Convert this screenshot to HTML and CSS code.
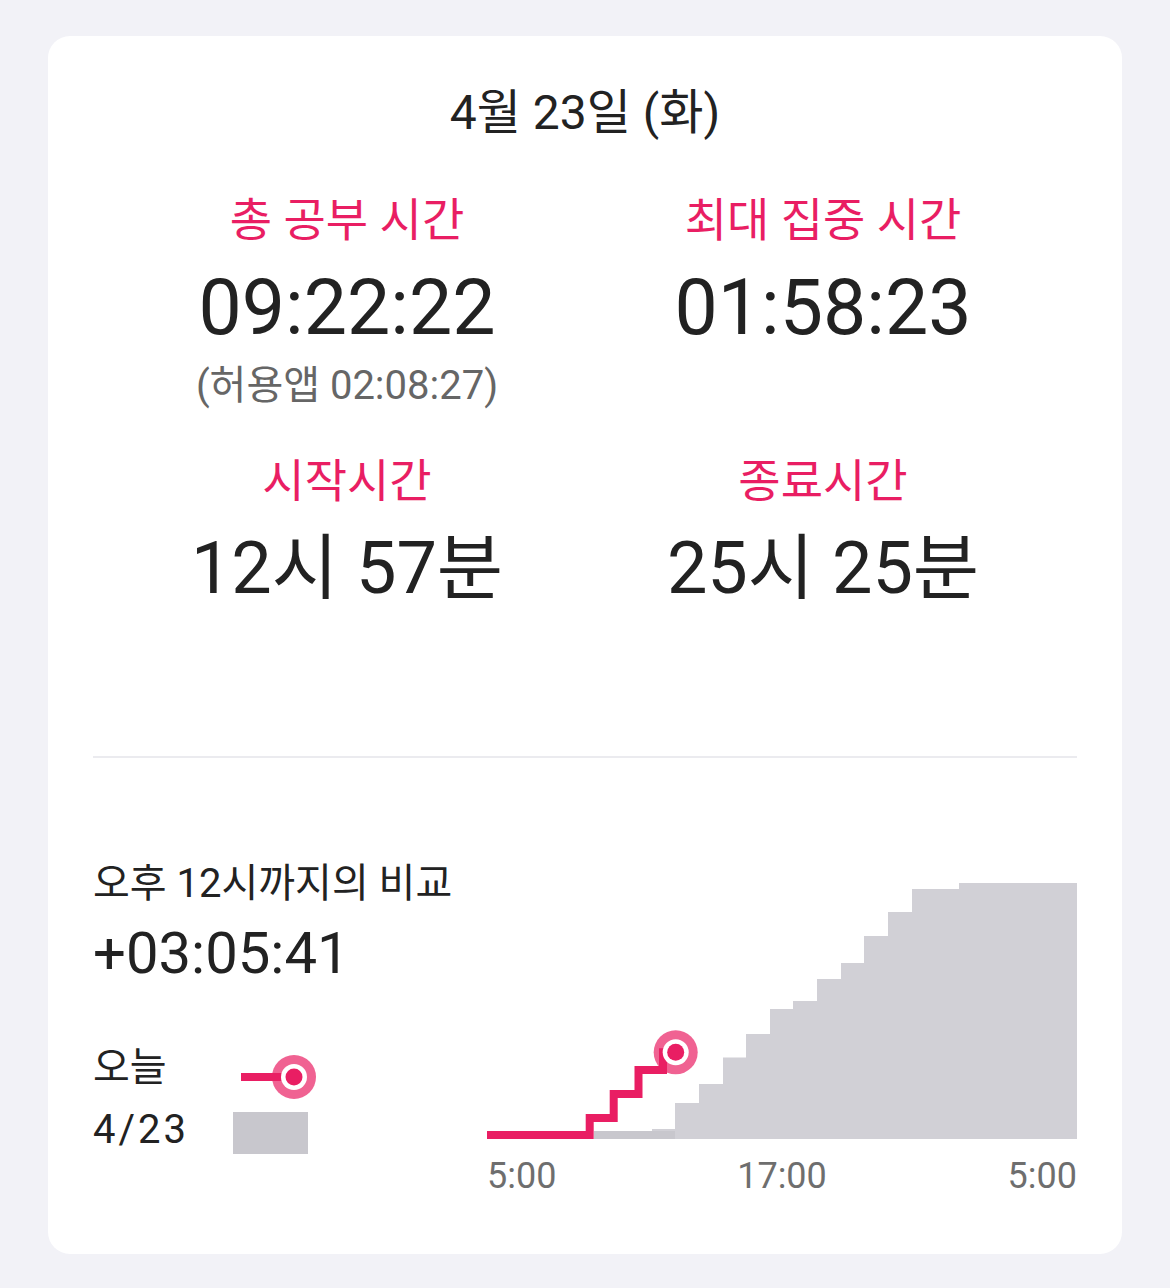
FILE: index.html
```html
<!DOCTYPE html>
<html lang="ko">

<head>
    <meta charset="UTF-8">
    <meta name="viewport" content="width=device-width, initial-scale=1.0">
    <title>공부 기록</title>
    <link rel="stylesheet" href="styles.css">
</head>

<body>
    <div class="card">
        <div class="date">4월 23일 (화)</div>

        <div class="stats">
            <div class="stat">
                <div class="label">총 공부 시간</div>
                <div class="value">09:22:22</div>
                <div class="sub">(허용앱 02:08:27)</div>
            </div>
            <div class="stat">
                <div class="label">최대 집중 시간</div>
                <div class="value">01:58:23</div>
            </div>
            <div class="stat">
                <div class="label">시작시간</div>
                <div class="value small">12시 57분</div>
            </div>
            <div class="stat">
                <div class="label">종료시간</div>
                <div class="value small">25시 25분</div>
            </div>
        </div>

        <div class="divider"></div>

        <div class="compare">
            <div class="compare-info">
                <div class="compare-title">오후 12시까지의 비교</div>
                <div class="compare-diff">+03:05:41</div>

                <div class="legend">
                    <div class="legend-row">
                        <span class="legend-name">오늘</span>
                        <svg class="legend-icon" width="84" height="46" viewBox="0 0 84 46">
                            <circle cx="61" cy="23" r="22" fill="#f06292" />
                            <line x1="8" y1="23" x2="61" y2="23" stroke="#e91e63" stroke-width="8" />
                            <circle cx="61" cy="23" r="13" fill="#fff" />
                            <circle cx="61" cy="23" r="8.5" fill="#e91e63" />
                        </svg>
                    </div>
                    <div class="legend-row">
                        <span class="legend-name date-name">4/23</span>
                        <span class="legend-box"></span>
                    </div>
                </div>
            </div>

            <div class="chart">
                <svg width="590" height="290" viewBox="0 0 590 290">
                    <!-- 4/23 누적 -->
                    <polygon fill="#d1d0d6" points="107,289 107,281 165,281 165,279 188,279 188,253 212,253 212,234 236,234 236,207.5 259,207.5 259,184 283,184 283,159 306,159 306,151 330,151 330,129 354,129 354,113 377,113 377,86 401,86 401,62 425,62 425,39 472,39 472,33 590,33 590,289" />
                    <rect x="107" y="281" width="81" height="8" fill="#c8c7cd" />
                    <!-- 오늘 누적 -->
                    <circle cx="188.7" cy="202.3" r="22" fill="#f06292" />
                    <path d="M0 285 H102.7 V268 H126.7 V244 H151.5 V220 H176 V202.3 H188" fill="none" stroke="#e91e63" stroke-width="8" />
                    <circle cx="188.7" cy="202.3" r="13" fill="#fff" />
                    <circle cx="188.7" cy="202.3" r="8.5" fill="#e91e63" />
                </svg>
                <div class="axis">
                    <span>5:00</span>
                    <span>17:00</span>
                    <span>5:00</span>
                </div>
            </div>
        </div>
    </div>
</body>

</html>
```

FILE: styles.css
```css
body {
    margin: 0;
    background: #f2f2f7;
    font-family: Roboto, "Noto Sans CJK KR", sans-serif;
    color: #222;
}

.card {
    box-sizing: border-box;
    width: 1074px;
    height: 1218px;
    margin: 36px 0 0 48px;
    padding: 49px 45px 0;
    background: #fff;
    border-radius: 22px;
}

.date {
    font-size: 48px;
    line-height: 56px;
    text-align: center;
}

.stats {
    display: grid;
    grid-template-columns: 476px 476px;
    justify-content: center;
    row-gap: 47px;
    margin-top: 54px;
}

.stat {
    display: flex;
    flex-direction: column;
    align-items: center;
}

.label {
    color: #e91e63;
    font-size: 46px;
    line-height: 50px;
}

.value {
    font-size: 77px;
    line-height: 90px;
    margin-top: 18px;
}

.value.small {
    font-size: 72px;
}

.sub {
    color: #666;
    font-size: 40px;
    line-height: 46px;
    margin-top: 10px;
}

.divider {
    height: 2px;
    background: #ebebef;
    margin-top: 142px;
}

.compare {
    display: flex;
    margin-top: 92px;
}

.compare-info {
    width: 394px;
    padding-top: 11px;
}

.compare-title {
    font-size: 40px;
    line-height: 46px;
}

.compare-diff {
    font-size: 58px;
    line-height: 64px;
    margin-top: 14px;
}

.legend {
    margin-top: 60px;
    display: flex;
    flex-direction: column;
    gap: 16px;
}

.legend-row {
    display: flex;
    align-items: center;
    height: 46px;
}

.legend-name {
    width: 140px;
    font-size: 40px;
    line-height: 46px;
}

.date-name {
    letter-spacing: 3px;
}

.legend-icon {
    margin-top: 18px;
}

.legend-box {
    width: 75px;
    height: 42px;
    margin-top: 5px;
    background: #c8c7cd;
}

.chart {
    width: 590px;
}

.chart svg {
    display: block;
}

.axis {
    display: flex;
    justify-content: space-between;
    margin-top: 16px;
    color: #6e6e6e;
    font-size: 36px;
    line-height: 40px;
}
```
